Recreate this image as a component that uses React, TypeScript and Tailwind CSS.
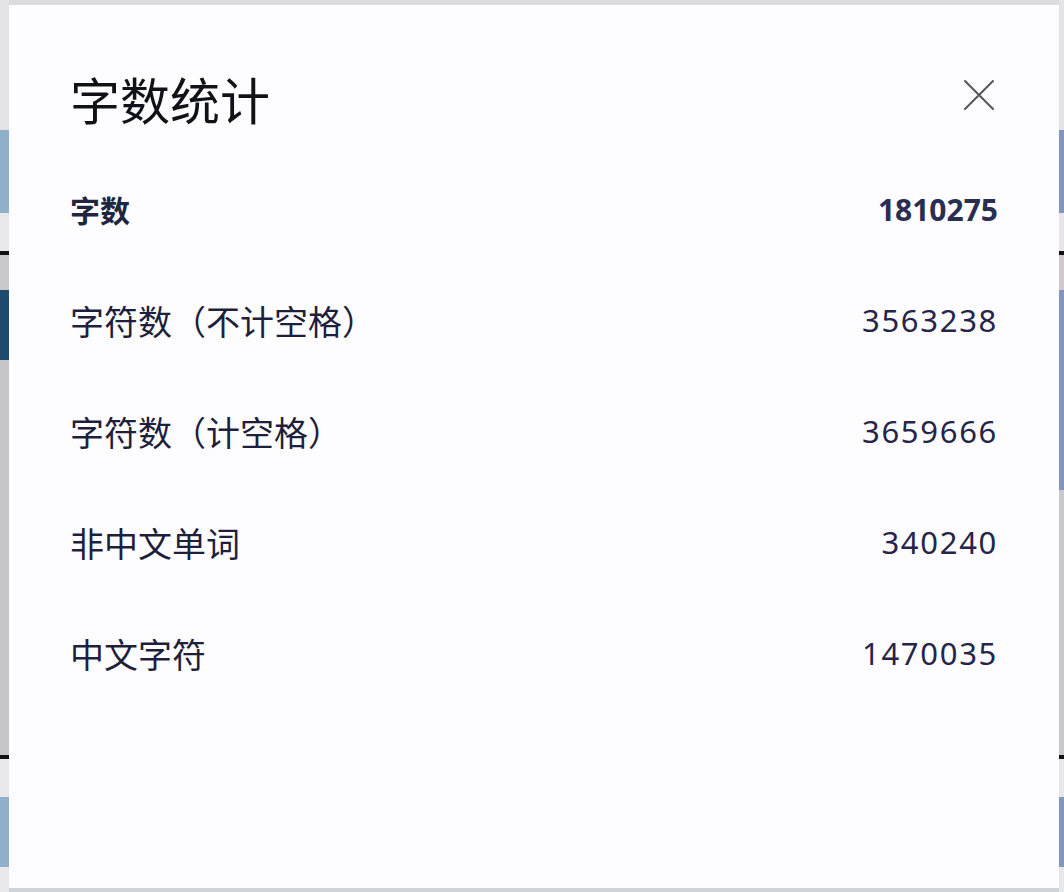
const rows = [
    { label: '字符数（不计空格）', value: '3563238' },
    { label: '字符数（计空格）', value: '3659666' },
    { label: '非中文单词', value: '340240' },
    { label: '中文字符', value: '1470035' },
];

const cjk = { fontFamily: '"Noto Sans CJK SC", "Noto Sans", sans-serif' };
const num = { fontFamily: '"Noto Sans", "Noto Sans CJK SC", sans-serif' };

function LeftStrip() {
    return (
        <div className="w-[9px] flex flex-col">
            <div className="h-[130px] bg-[#e4e4e6]" />
            <div className="h-[83px] bg-[#8fb0c8]" />
            <div className="h-[38px] bg-[#e8e8ea]" />
            <div className="h-[4px] bg-[#111]" />
            <div className="h-[35px] bg-[#c9c9cb]" />
            <div className="h-[70px] bg-[#1f4a6c]" />
            <div className="h-[395px] bg-[#c6c6c8]" />
            <div className="h-[4px] bg-[#111]" />
            <div className="h-[38px] bg-[#e8e8ea]" />
            <div className="h-[70px] bg-[#8fb0c8]" />
            <div className="flex-1 bg-[#e8e8ea]" />
        </div>
    );
}

function RightStrip() {
    return (
        <div className="w-[5px] flex flex-col">
            <div className="h-[130px] bg-[#e4e4e6]" />
            <div className="h-[83px] bg-[#7f97bd]" />
            <div className="h-[38px] bg-[#e8e4ea]" />
            <div className="h-[4px] bg-[#111]" />
            <div className="h-[35px] bg-[#d0c8cc]" />
            <div className="h-[200px] bg-[#7f97bd]" />
            <div className="h-[265px] bg-[#c8c8ca]" />
            <div className="h-[4px] bg-[#111]" />
            <div className="h-[38px] bg-[#e8e8ea]" />
            <div className="h-[70px] bg-[#7f97bd]" />
            <div className="flex-1 bg-[#e8e8ea]" />
        </div>
    );
}

export default function App() {
    return (
        <div className="w-full h-[892px] flex bg-[#d8d8da] overflow-hidden">
            <LeftStrip />
            <div className="flex-1 flex flex-col">
                <div className="h-[5px] bg-[#dcdcde]" />
                <div className="flex-1 bg-[#fdfdff] px-[61px] pt-[68px]">
                    <div className="h-[50px] flex items-center justify-between mb-[31px]">
                        <h2 className="text-[50px] leading-none text-[#111118]" style={cjk}>字数统计</h2>
                        <button className="text-[#55555f] w-[34px] h-[34px] flex items-center justify-center mr-[2px] -mt-[6px]" title="关闭">
                            <svg width="32" height="32" viewBox="0 0 32 32" fill="none" stroke="currentColor" strokeWidth="2" strokeLinecap="round">
                                <path d="M2 2L30 30M30 2L2 30" />
                            </svg>
                        </button>
                    </div>
                    <div className="h-[111px] flex items-center justify-between">
                        <span className="text-[30px] font-bold text-[#22253f]" style={cjk}>字数</span>
                        <span className="text-[30px] font-bold text-[#2a2f52]" style={num}>1810275</span>
                    </div>
                    {rows.map((r) => (
                        <div key={r.label} className="h-[111px] flex items-center justify-between">
                            <span className="text-[34px] text-[#1f1f3c]" style={cjk}>{r.label}</span>
                            <span className="text-[31px] tracking-[1.7px] text-[#25254a]" style={num}>{r.value}</span>
                        </div>
                    ))}
                </div>
                <div className="h-[4px] bg-[#cfd3da]" />
            </div>
            <RightStrip />
        </div>
    );
}
